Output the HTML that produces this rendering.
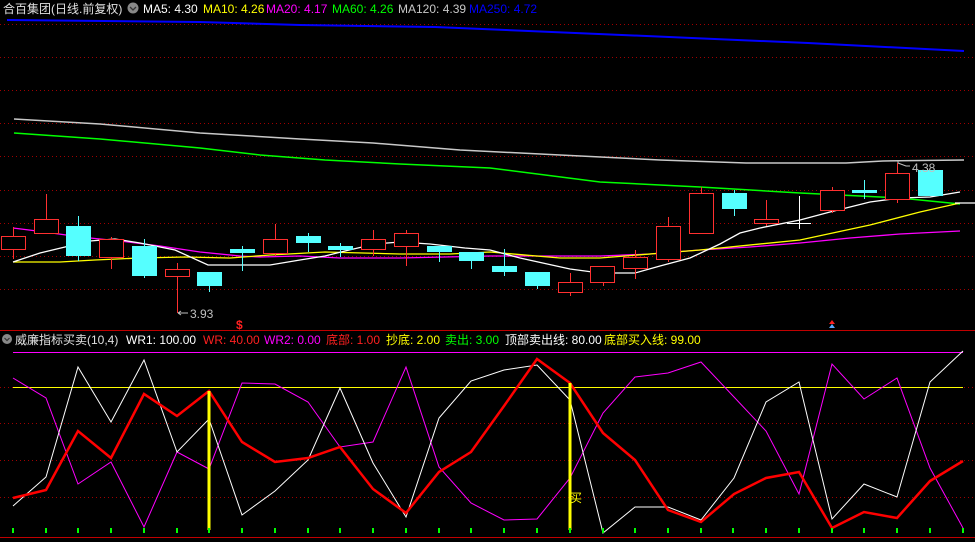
<!DOCTYPE html>
<html><head><meta charset="utf-8"><style>
html,body{margin:0;padding:0;background:#000;width:975px;height:542px;overflow:hidden}
svg{display:block}
text{font-family:"Liberation Sans","Noto Sans CJK SC",sans-serif;font-size:12px}
</style></head><body>
<svg width="975" height="542" viewBox="0 0 975 542" xmlns="http://www.w3.org/2000/svg">
<rect width="975" height="542" fill="#000"/>
<g stroke="#a00000" stroke-width="1" stroke-dasharray="1,3" shape-rendering="crispEdges">
<line x1="0" y1="24.5" x2="975" y2="24.5"/><line x1="0" y1="57.5" x2="975" y2="57.5"/>
<line x1="0" y1="90.5" x2="975" y2="90.5"/><line x1="0" y1="123.5" x2="975" y2="123.5"/>
<line x1="0" y1="156.5" x2="975" y2="156.5"/><line x1="0" y1="190.5" x2="975" y2="190.5"/>
<line x1="0" y1="223.5" x2="975" y2="223.5"/><line x1="0" y1="256.5" x2="975" y2="256.5"/>
<line x1="0" y1="289.5" x2="975" y2="289.5"/>
<line x1="0" y1="387.5" x2="975" y2="387.5"/><line x1="0" y1="423.5" x2="975" y2="423.5"/>
<line x1="0" y1="460.5" x2="975" y2="460.5"/><line x1="0" y1="497.5" x2="975" y2="497.5"/>
</g>
<line x1="0" y1="330.5" x2="975" y2="330.5" stroke="#c00000" shape-rendering="crispEdges"/>
<line x1="0" y1="537.5" x2="975" y2="537.5" stroke="#c00000" shape-rendering="crispEdges"/>
<g fill="none" stroke-width="1.3">
<polyline stroke="#0000ff" stroke-width="2" points="7,20 200,22 300,25 435,27 622,35 808,43 964,51"/>
<polyline stroke="#c8c8c8" stroke-width="1.5" points="14,119 100,124 200,133 300,139 373,143 460,150 560,155 660,160 746,163 846,163 883,161 964,160"/>
<polyline stroke="#00ff00" stroke-width="1.5" points="14,133 100,139 200,148 260,155 325,160 400,164 490,168 600,182 700,187 800,193 900,198 960,204"/>
<polyline stroke="#ff00ff" points="13,228 45,232 80,237 120,241 160,246 200,252 240,256 260,257 300,256 340,258 400,258 490,256 600,256 650,254 700,250 750,247 800,243 850,238 900,234 960,231"/>
<polyline stroke="#ffff00" points="13,262 60,262 95,260 140,258 185,257 230,258 270,255 325,252 400,254 450,254 490,252 560,258 600,258 700,250 800,240 870,225 920,212 960,203"/>
<polyline stroke="#ffffff" points="13,262 40,253 65,247 90,241 115,239 140,243 175,250 208,265 225,265 270,265 300,260 325,256 345,251 375,244 400,242 430,244 465,248 490,250 520,258 570,269 600,273 635,273 660,266 690,258 720,244 740,233 760,228 800,220 830,212 870,202 900,198 930,197 960,192"/>
<line x1="955" y1="203" x2="975" y2="203" stroke="#fff"/>
</g>
<g shape-rendering="crispEdges" stroke-width="1">
<g stroke="#ff3030" fill="none">
<line x1="13.5" y1="227" x2="13.5" y2="259"/><rect x="1.5" y="236.5" width="24" height="13" fill="#000"/>
<line x1="46.5" y1="194" x2="46.5" y2="233"/><rect x="34.5" y="219.5" width="24" height="14" fill="#000"/>
<line x1="111.5" y1="237" x2="111.5" y2="269"/><rect x="99.5" y="239.5" width="24" height="18" fill="#000"/>
<line x1="177.5" y1="263" x2="177.5" y2="313"/><rect x="165.5" y="269.5" width="24" height="7" fill="#000"/>
<line x1="275.5" y1="224" x2="275.5" y2="256"/><rect x="263.5" y="239.5" width="24" height="14" fill="#000"/>
<line x1="373.5" y1="230" x2="373.5" y2="256"/><rect x="361.5" y="239.5" width="24" height="10" fill="#000"/>
<line x1="406.5" y1="230" x2="406.5" y2="266"/><rect x="394.5" y="233.5" width="24" height="13" fill="#000"/>
<line x1="570.5" y1="273" x2="570.5" y2="296"/><rect x="558.5" y="282.5" width="24" height="10" fill="#000"/>
<line x1="603.5" y1="266" x2="603.5" y2="286"/><rect x="590.5" y="266.5" width="24" height="16" fill="#000"/>
<line x1="635.5" y1="250" x2="635.5" y2="279"/><rect x="623.5" y="257.5" width="24" height="11" fill="#000"/>
<line x1="668.5" y1="217" x2="668.5" y2="262"/><rect x="656.5" y="226.5" width="24" height="33" fill="#000"/>
<line x1="701.5" y1="187" x2="701.5" y2="193"/><rect x="689.5" y="193.5" width="24" height="40" fill="#000"/>
<line x1="766.5" y1="200" x2="766.5" y2="226"/><rect x="754.5" y="219.5" width="24" height="4" fill="#000"/>
<line x1="832.5" y1="187" x2="832.5" y2="213"/><rect x="820.5" y="190.5" width="24" height="20" fill="#000"/>
<line x1="897.5" y1="163" x2="897.5" y2="203"/><rect x="885.5" y="173.5" width="24" height="26" fill="#000"/>
</g>
<g stroke="#55ffff" fill="#55ffff">
<line x1="78.5" y1="216" x2="78.5" y2="261"/><rect x="66" y="226" width="25" height="30" stroke="none"/>
<line x1="144.5" y1="239" x2="144.5" y2="278"/><rect x="132" y="246" width="25" height="30" stroke="none"/>
<line x1="209.5" y1="286" x2="209.5" y2="292"/><rect x="197" y="272" width="25" height="14" stroke="none"/>
<line x1="242.5" y1="246" x2="242.5" y2="271"/><rect x="230" y="249" width="25" height="4" stroke="none"/>
<line x1="308.5" y1="233" x2="308.5" y2="252"/><rect x="296" y="236" width="25" height="7" stroke="none"/>
<line x1="340.5" y1="243" x2="340.5" y2="257"/><rect x="328" y="246" width="25" height="4" stroke="none"/>
<line x1="439.5" y1="252" x2="439.5" y2="262"/><rect x="427" y="246" width="25" height="6" stroke="none"/>
<line x1="471.5" y1="261" x2="471.5" y2="269"/><rect x="459" y="252" width="25" height="9" stroke="none"/>
<line x1="504.5" y1="249" x2="504.5" y2="276"/><rect x="492" y="266" width="25" height="6" stroke="none"/>
<line x1="537.5" y1="286" x2="537.5" y2="289"/><rect x="525" y="272" width="25" height="14" stroke="none"/>
<line x1="734.5" y1="190" x2="734.5" y2="216"/><rect x="722" y="193" width="25" height="16" stroke="none"/>
<line x1="864.5" y1="180" x2="864.5" y2="199"/><rect x="852" y="190" width="25" height="3" stroke="none"/>
<rect x="918" y="170" width="25" height="26" stroke="none"/>
</g>
<g stroke="#fff"><line x1="799.5" y1="196" x2="799.5" y2="229"/><line x1="787" y1="223.5" x2="811" y2="223.5"/></g>
</g>
<text x="190" y="318" fill="#c0c0c0" font-size="11">3.93</text>
<path d="M178 313 H188 M178 313 l3 -2 M178 313 l3 2" stroke="#c0c0c0" fill="none"/>
<text x="912" y="172" fill="#c0c0c0" font-size="11">4.38</text>
<path d="M898 163 v-3 M898 163 l8 3 H910" stroke="#c0c0c0" fill="none"/>
<text x="236" y="329" fill="#ff2020" font-size="10" font-weight="bold">$</text>
<path d="M832 320 l-3 4 h6z" fill="#ff2020"/><path d="M832 324 l-3 4 h6z" fill="#55aaff"/>
<text x="3" y="13" fill="#e0e0e0">合百集团(日线.前复权)</text>
<circle cx="133" cy="8" r="5.5" fill="#888"/><path d="M130 7 l3 3 l3 -3" stroke="#333" fill="none" stroke-width="1.3"/>
<text x="143" y="13" fill="#fff">MA5: 4.30</text>
<text x="203" y="13" fill="#ffff00">MA10: 4.26</text>
<text x="266" y="13" fill="#ff00ff">MA20: 4.17</text>
<text x="332" y="13" fill="#00ff00">MA60: 4.26</text>
<text x="398" y="13" fill="#c8c8c8">MA120: 4.39</text>
<text x="469" y="13" fill="#0000ff">MA250: 4.72</text>
<circle cx="7" cy="339" r="5" fill="#888"/><path d="M4.5 338 l2.5 2.5 l2.5 -2.5" stroke="#333" fill="none" stroke-width="1.2"/>
<text x="15" y="344" fill="#e0e0e0">威廉指标买卖(10,4)</text>
<text x="126" y="344" fill="#fff">WR1: 100.00</text>
<text x="203" y="344" fill="#ff2020">WR: 40.00</text>
<text x="264" y="344" fill="#ff00ff">WR2: 0.00</text>
<text x="326" y="344" fill="#ff2020">底部: 1.00</text>
<text x="386" y="344" fill="#ffff00">抄底: 2.00</text>
<text x="445" y="344" fill="#00ff00">卖出: 3.00</text>
<text x="505" y="344" fill="#fff">顶部卖出线: 80.00</text>
<text x="604" y="344" fill="#ffff00">底部买入线: 99.00</text>
<line x1="13" y1="352.5" x2="963" y2="352.5" stroke="#ff00ff" shape-rendering="crispEdges"/>
<line x1="13" y1="387.5" x2="963" y2="387.5" stroke="#ffff00" shape-rendering="crispEdges"/>
<g fill="none">
<polyline stroke="#ff00ff" stroke-width="1" points="13,378 46,398 78,484 111,462 144,527 177,452 209,469 242,383 275,384 308,402 340,447 373,442 406,367 439,467 471,503 504,520 537,519 570,478 603,413 635,377 668,373 701,362 734,397 766,431 799,494 832,364 864,399 897,378 930,468 963,528"/>
<polyline stroke="#ffffff" stroke-width="1" points="13,506 46,477 78,367 111,422 144,360 177,452 209,419 242,515 275,491 308,460 340,388 373,463 406,517 439,418 471,381 504,370 537,365 570,400 603,533 635,507 668,507 701,520 734,478 766,402 799,382 832,519 864,484 897,497 930,382 963,351"/>
<polyline stroke="#ff0000" stroke-width="2.5" points="13,498 46,490 78,431 111,458 144,394 177,416 209,391 242,442 275,462 308,458 340,447 373,489 406,513 439,472 471,452 504,406 537,359 570,383 603,433 635,460 668,510 701,522 734,494 766,478 799,472 832,528 864,512 897,518 930,481 963,461"/>
</g>
<rect x="207.5" y="391" width="3" height="139" fill="#ffff00"/>
<rect x="568.5" y="383" width="3" height="147" fill="#ffff00"/>
<text x="570" y="502" fill="#ffff00" font-size="11">买</text>
<g fill="#00ff00" shape-rendering="crispEdges">
<rect x="12" y="528" width="2" height="5"/><rect x="45" y="528" width="2" height="5"/><rect x="77" y="528" width="2" height="5"/><rect x="110" y="528" width="2" height="5"/><rect x="143" y="528" width="2" height="5"/><rect x="176" y="528" width="2" height="5"/><rect x="208" y="528" width="2" height="5"/><rect x="241" y="528" width="2" height="5"/><rect x="274" y="528" width="2" height="5"/><rect x="307" y="528" width="2" height="5"/><rect x="339" y="528" width="2" height="5"/><rect x="372" y="528" width="2" height="5"/><rect x="405" y="528" width="2" height="5"/><rect x="438" y="528" width="2" height="5"/><rect x="470" y="528" width="2" height="5"/><rect x="503" y="528" width="2" height="5"/><rect x="536" y="528" width="2" height="5"/><rect x="569" y="528" width="2" height="5"/><rect x="602" y="528" width="2" height="5"/><rect x="634" y="528" width="2" height="5"/><rect x="667" y="528" width="2" height="5"/><rect x="700" y="528" width="2" height="5"/><rect x="732" y="528" width="2" height="5"/><rect x="765" y="528" width="2" height="5"/><rect x="798" y="528" width="2" height="5"/><rect x="831" y="528" width="2" height="5"/><rect x="863" y="528" width="2" height="5"/><rect x="896" y="528" width="2" height="5"/><rect x="929" y="528" width="2" height="5"/><rect x="962" y="528" width="2" height="5"/>
</g>
<text x="15" y="551" fill="#ccc" font-size="11">VOLUME: 9.4415 79000 MA10: 90000</text>
</svg>
</body></html>
